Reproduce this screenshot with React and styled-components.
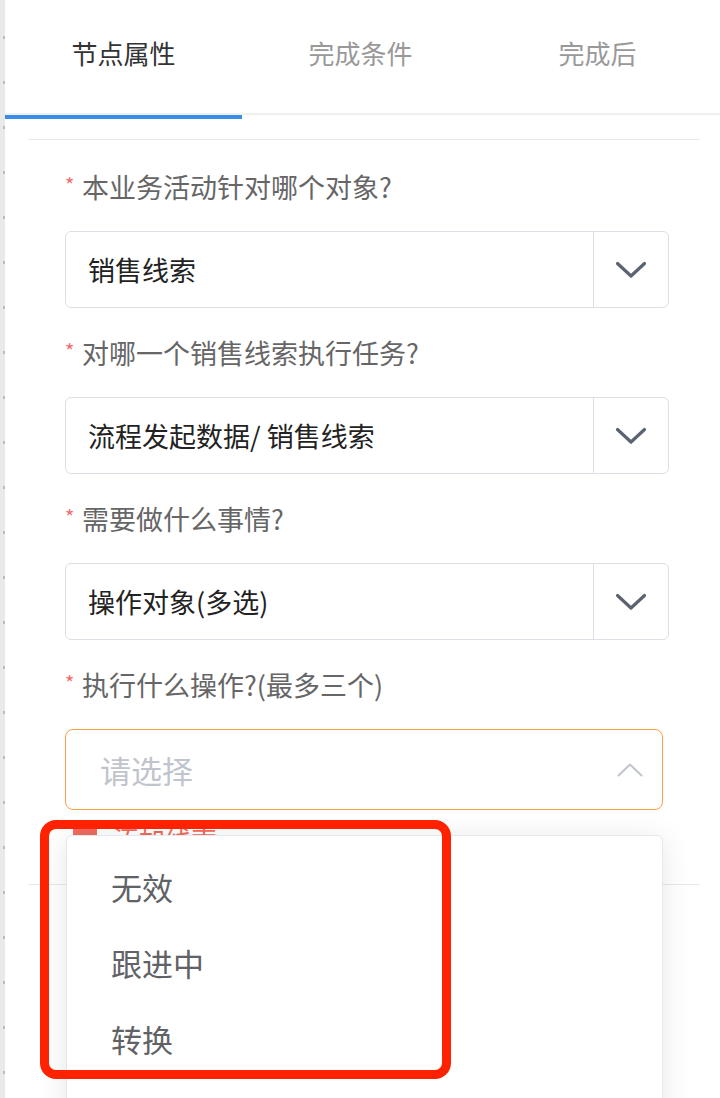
import React from "react";
import styled, { createGlobalStyle } from "styled-components";

const GlobalStyle = createGlobalStyle`
  html, body { margin: 0; padding: 0; background: #fff; }
  body { font-family: "Noto Sans CJK SC", "Noto Sans", sans-serif; }
  * { box-sizing: border-box; }
`;

const Page = styled.div`
  position: relative;
  display: flex;
  width: 720px;
  height: 1098px;
  overflow: hidden;
  background: #fff;
`;

const Rail = styled.div`
  width: 5px;
  flex: none;
  background-color: #e9e9e9;
  background-image: repeating-linear-gradient(
    to bottom,
    transparent 0px,
    transparent 36px,
    #bdbdbd 36px,
    #bdbdbd 39px,
    transparent 39px,
    transparent 45px
  );
  background-size: 2px 45px;
  background-position: 3px 0;
  background-repeat: repeat-y;
`;

const Panel = styled.div`
  flex: 1;
  display: flex;
  flex-direction: column;
  min-width: 0;
`;

const TabBar = styled.div`
  display: flex;
  height: 115px;
  border-bottom: 2px solid #f0f0f0;
`;

const Tab = styled.div`
  width: 237px;
  flex: none;
  display: flex;
  align-items: center;
  justify-content: center;
  padding-bottom: 8px;
  font-size: 26px;
  color: ${(p) => (p.$active ? "#333" : "#999")};
`;

const InkRow = styled.div`
  display: flex;
  height: 4px;
`;

const Ink = styled.div`
  width: 237px;
  height: 4px;
  background: #3a8ee6;
`;

const Body = styled.div`
  margin: 20px 20px 0 23px;
  border-top: 1px solid #e8e8e8;
  display: flex;
  flex-direction: column;
  padding: 29px 0 0 37px;
`;

const Field = styled.div`
  display: flex;
  flex-direction: column;
  gap: 27px;
  margin-bottom: 27px;
`;

const Label = styled.div`
  display: flex;
  align-items: center;
  height: 35px;
  font-size: 27px;
  color: #666;
`;

const Star = styled.span`
  color: #f56c6c;
  font-size: 20px;
  width: 17px;
  margin-top: -4px;
`;

const Select = styled.div`
  display: flex;
  width: 604px;
  height: 77px;
  border: 1px solid #dcdfe6;
  border-radius: 6px;
`;

const SelectValue = styled.div`
  flex: 1;
  display: flex;
  align-items: center;
  padding-left: 22px;
  font-size: 27px;
  color: #222;
`;

const SelectArrow = styled.div`
  width: 75px;
  flex: none;
  display: flex;
  align-items: center;
  justify-content: center;
  border-left: 1px solid #dcdfe6;
`;

const OpenSelect = styled.div`
  display: flex;
  align-items: center;
  justify-content: space-between;
  width: 598px;
  height: 81px;
  border: 1px solid #ffa048;
  border-radius: 8px;
  padding: 0 19px 0 34px;
`;

const Placeholder = styled.span`
  font-size: 31px;
  color: #c0c4cc;
`;

const AddRow = styled.div`
  display: flex;
  align-items: center;
  gap: 16px;
  height: 28px;
  margin-top: -13px;
  padding-left: 8px;
  color: #f06a5c;
  font-size: 26px;
`;

const AddIcon = styled.span`
  width: 24px;
  height: 24px;
  border-radius: 3px;
  background: #ef6b5e;
`;

const Divider = styled.div`
  margin: 32px 20px 0 23px;
  border-top: 1px solid #e8e8e8;
`;

const Dropdown = styled.div`
  position: absolute;
  left: 66px;
  top: 835px;
  width: 597px;
  height: 300px;
  background: #fff;
  border: 1px solid #e4e7ed;
  border-radius: 6px;
  box-shadow: 0 4px 30px rgba(0, 0, 0, 0.1);
  padding-top: 12px;
  z-index: 2;
`;

const Option = styled.div`
  height: 76px;
  display: flex;
  align-items: center;
  padding-left: 44px;
  font-size: 31px;
  color: #606266;
`;

const Annotation = styled.div`
  position: absolute;
  left: 40px;
  top: 820px;
  width: 411px;
  height: 259px;
  border: 9px solid #ff2200;
  border-radius: 16px;
  z-index: 3;
  pointer-events: none;
`;

const ChevronDown = () => (
  <svg width="32" height="20" viewBox="0 0 32 20" fill="none">
    <path d="M2.5 3.5 L16 16 L29.5 3.5" stroke="#5c6370" strokeWidth="3.2" strokeLinecap="round" strokeLinejoin="round" />
  </svg>
);

const ChevronUp = () => (
  <svg width="26" height="16" viewBox="0 0 26 16" fill="none">
    <path d="M1.5 13.5 L13 2.5 L24.5 13.5" stroke="#c0c4cc" strokeWidth="2" strokeLinecap="round" strokeLinejoin="round" />
  </svg>
);

const fields = [
  { label: "本业务活动针对哪个对象?", value: "销售线索" },
  { label: "对哪一个销售线索执行任务?", value: "流程发起数据/ 销售线索" },
  { label: "需要做什么事情?", value: "操作对象(多选)" },
];

const options = ["无效", "跟进中", "转换"];

export default function App() {
  return (
    <>
      <GlobalStyle />
      <Page>
        <Rail />
        <Panel>
          <TabBar>
            <Tab $active>节点属性</Tab>
            <Tab>完成条件</Tab>
            <Tab>完成后</Tab>
          </TabBar>
          <InkRow>
            <Ink />
          </InkRow>
          <Body>
            {fields.map((f) => (
              <Field key={f.label}>
                <Label>
                  <Star>*</Star>
                  {f.label}
                </Label>
                <Select>
                  <SelectValue>{f.value}</SelectValue>
                  <SelectArrow>
                    <ChevronDown />
                  </SelectArrow>
                </Select>
              </Field>
            ))}
            <Field>
              <Label>
                <Star>*</Star>
                执行什么操作?(最多三个)
              </Label>
              <OpenSelect>
                <Placeholder>请选择</Placeholder>
                <ChevronUp />
              </OpenSelect>
            </Field>
            <AddRow>
              <AddIcon />
              添加线索
            </AddRow>
          </Body>
          <Divider />
        </Panel>
        <Dropdown>
          {options.map((o) => (
            <Option key={o}>{o}</Option>
          ))}
        </Dropdown>
        <Annotation />
      </Page>
    </>
  );
}
